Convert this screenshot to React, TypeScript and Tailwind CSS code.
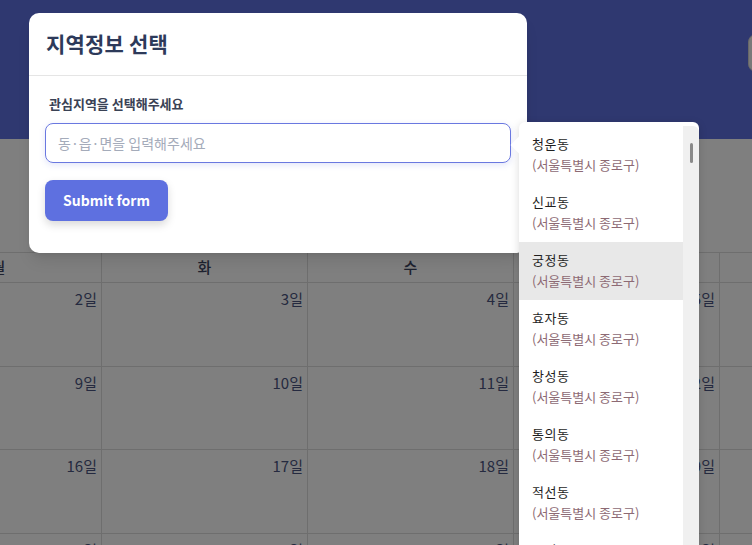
import React from "react";

const days = ["월", "화", "수", "목", "금", "토", "일"];
const weeks = [
  { h: "h-[84px]", dates: [2, 3, 4, 5, 6, 7, 8] },
  { h: "h-[83px]", dates: [9, 10, 11, 12, 13, 14, 15] },
  { h: "h-[84px]", dates: [16, 17, 18, 19, 20, 21, 22] },
  { h: "h-[84px]", dates: [23, 24, 25, 26, 27, 28, 29] },
];
const dongs = ["청운동", "신교동", "궁정동", "효자동", "창성동", "통의동", "적선동", "통인동"];

export default function App() {
  return (
    <div className="relative w-full h-screen overflow-hidden bg-white font-['Noto_Sans_CJK_KR',sans-serif]">
      {/* page underneath */}
      <header className="h-[139px] bg-[#5e70e0] flex justify-end pt-[34px]">
        <button className="w-[60px] h-[38px] rounded-lg bg-[#f2f2f2] border border-[#d0d0d0] -mr-[56px] shrink-0" />
      </header>
      <main className="pt-[113px] -ml-[104px]">
        <div className="w-max border-t border-[#dcdcdc]">
          <div className="grid grid-cols-[repeat(7,206px)]">
            {days.map((d) => (
              <div
                key={d}
                className="h-[30px] border-r border-b border-[#dcdcdc] flex items-center justify-center text-[15px] font-medium text-[#3c4460]"
              >
                {d}
              </div>
            ))}
          </div>
          {weeks.map((w, i) => (
            <div key={i} className="grid grid-cols-[repeat(7,206px)]">
              {w.dates.map((n) => (
                <div
                  key={n}
                  className={`${w.h} border-r border-b border-[#dcdcdc] text-right pr-[4px] pt-[6px] text-[15px] leading-[20px] text-[#4a5480]`}
                >
                  {n}일
                </div>
              ))}
            </div>
          ))}
        </div>
      </main>

      {/* backdrop */}
      <div className="absolute inset-0 bg-black/50" />

      {/* modal */}
      <div className="absolute left-[29px] top-[13px] w-[498px] h-[240px] bg-white rounded-[10px] shadow-lg">
        <div className="h-[63px] flex items-center px-[17px] border-b border-[#e5e5e5]">
          <h2 className="text-[21px] font-bold text-[#2d3a5a] tracking-[0.2px]">지역정보 선택</h2>
        </div>
        <div className="px-4 pt-[19px]">
          <label htmlFor="dong" className="block pl-1 text-[13px] leading-[18px] font-semibold text-[#3a4255]">
            관심지역을 선택해주세요
          </label>
          <input
            id="dong"
            autoFocus
            placeholder="동·읍·면을 입력해주세요"
            className="mt-[10px] w-full h-[40px] rounded-lg border border-[#6a78e0] px-3 text-[14px] text-[#333] placeholder:text-[#a4abba] outline-none shadow-[0_2px_6px_rgba(94,112,224,0.18)] caret-[#333]"
          />
          <button className="mt-[17px] w-[123px] h-[41px] rounded-lg bg-[#5e70e0] text-white text-[14px] font-bold shadow-[0_4px_8px_rgba(0,0,0,0.15)]">
            Submit form
          </button>
        </div>
      </div>

      {/* suggestion popover */}
      <div className="absolute left-[519px] top-[122px] w-[180px] h-[440px] bg-white rounded-md shadow-[0_2px_8px_rgba(0,0,0,0.15)]">
        <div className="absolute -left-[6px] top-[17px] w-[12px] h-[12px] rotate-45 bg-white" />
        <div className="relative flex h-full pt-1">
          <ul className="flex-1">
            {dongs.map((d, i) => (
              <li key={d} className={`h-[58px] px-[13px] pt-[9px] ${i === 2 ? "bg-[#e8e8e8]" : ""}`}>
                <div className="text-[13px] leading-[18px] text-[#1f1f1f] tracking-[0.5px]">{d}</div>
                <div className="mt-[3px] text-[13px] leading-[18px] text-[#8d6a74]">(서울특별시 종로구)</div>
              </li>
            ))}
          </ul>
          <div className="w-4 bg-[#f0f0f0] rounded-tr-md flex justify-center pt-[17px]">
            <div className="w-[3px] h-[20px] rounded-full bg-[#8a8a8a]" />
          </div>
        </div>
      </div>
    </div>
  );
}
